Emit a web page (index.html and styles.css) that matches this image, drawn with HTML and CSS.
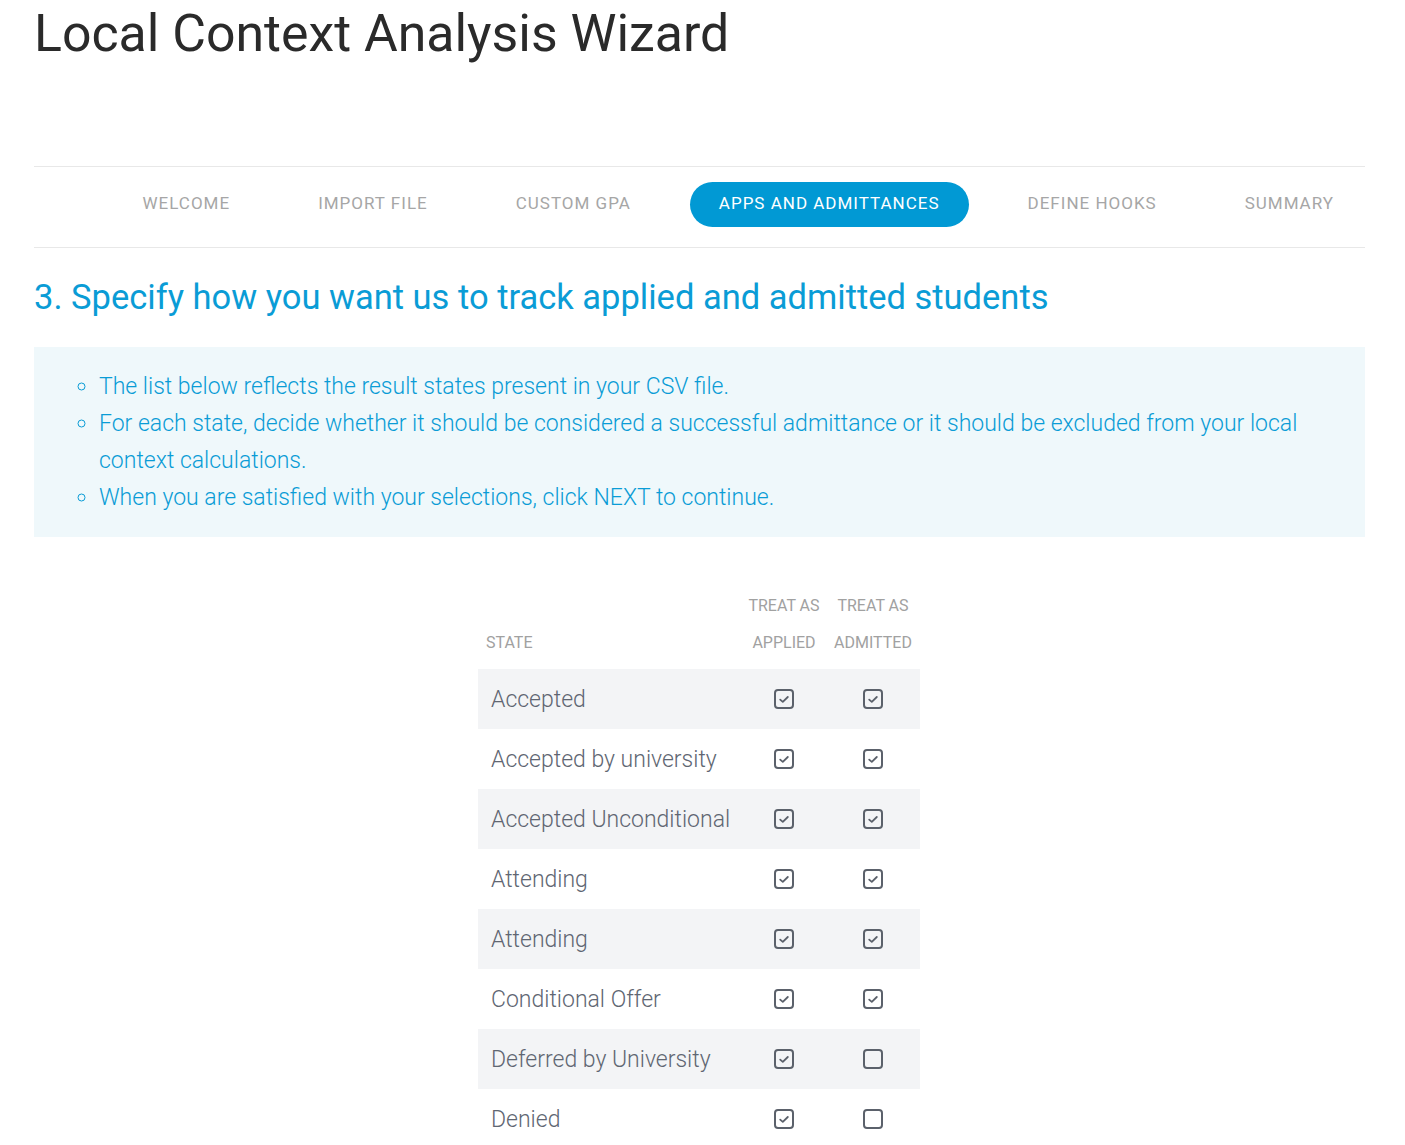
FILE: index.html
```html
<!DOCTYPE html>
<html lang="en">
<head>
  <meta charset="UTF-8">
  <meta name="viewport" content="width=device-width, initial-scale=1.0">
  <title>Local Context Analysis Wizard</title>
  <link rel="stylesheet" href="styles.css">
</head>
<body>

  <div class="page">
    <h1 class="title">Local Context Analysis Wizard</h1>

    <ul class="steps">
      <li class="step">Welcome</li>
      <li class="step">Import File</li>
      <li class="step">Custom GPA</li>
      <li class="step active">Apps and Admittances</li>
      <li class="step">Define Hooks</li>
      <li class="step">Summary</li>
    </ul>

    <h2 class="heading">3. Specify how you want us to track applied and admitted students</h2>

    <div class="info">
      <ul>
        <li>The list below reflects the result states present in your CSV file.</li>
        <li>For each state, decide whether it should be considered a successful admittance or it should be excluded from your local context calculations.</li>
        <li>When you are satisfied with your selections, click NEXT to continue.</li>
      </ul>
    </div>

    <table class="states">
      <thead>
        <tr>
          <th class="state-col">State</th>
          <th class="applied">Treat as<br>applied</th>
          <th class="admitted">Treat as<br>admitted</th>
        </tr>
      </thead>
      <tbody id="stateRows"></tbody>
    </table>
  </div>

  <script>
    const states = [
      ['Accepted', true, true],
      ['Accepted by university', true, true],
      ['Accepted Unconditional', true, true],
      ['Attending', true, true],
      ['Attending', true, true],
      ['Conditional Offer', true, true],
      ['Deferred by University', true, false],
      ['Denied', true, false]
    ];
    const tick = '<svg viewBox="0 0 20 20" width="20" height="20"><rect x="1" y="1" width="18" height="18" rx="3" fill="none" stroke="#5b616b" stroke-width="2"/><path d="M6.2 10.6 L8.8 12.9 L13.8 8" fill="none" stroke="#5b616b" stroke-width="1.8" stroke-linecap="round" stroke-linejoin="round"/></svg>';
    const blank = '<svg viewBox="0 0 20 20" width="20" height="20"><rect x="1" y="1" width="18" height="18" rx="3" fill="none" stroke="#5b616b" stroke-width="2"/></svg>';
    const rows = document.getElementById('stateRows');

    states.forEach(([name, applied, admitted]) => {
      const tr = document.createElement('tr');
      tr.innerHTML = `<td class="state-col">${name}</td>` +
        `<td class="box">${applied ? tick : blank}</td>` +
        `<td class="box">${admitted ? tick : blank}</td>`;
      rows.appendChild(tr);
    });
  </script>

</body>
</html>
```

FILE: styles.css
```css
body {
  margin: 0;
  font-family: Roboto, "Liberation Sans", sans-serif;
  background-color: #fff;
}
.page {
  margin: 0 40px 0 34px;
}
.title {
  margin: 0;
  padding-top: 3px;
  font-size: 51.8px;
  font-weight: 400;
  line-height: 62px;
  color: #2a2a2a;
}
.steps {
  list-style: none;
  margin: 101px 0 0;
  padding: 15px 2px 20px 0;
  border-top: 1px solid #e8e8e8;
  border-bottom: 1px solid #e8e8e8;
  display: flex;
  justify-content: flex-end;
  gap: 30px;
}
.step {
  padding: 0 29px;
  height: 45px;
  line-height: 43px;
  border-radius: 23px;
  font-size: 17px;
  letter-spacing: 1px;
  text-transform: uppercase;
  color: #a6a6a6;
}
.step.active {
  background-color: #0199d4;
  color: #fff;
}
.heading {
  margin: 29px 0 0;
  font-size: 34.5px;
  font-weight: 400;
  line-height: 40px;
  color: #0a9cd6;
}
.info {
  margin-top: 30px;
  background-color: #eff8fb;
  padding: 21px 60px 21px 0;
}
.info ul {
  margin: 0;
  padding-left: 65px;
  list-style: circle;
}
.info li {
  font-size: 23px;
  font-weight: 300;
  line-height: 37px;
  color: #0a9cd6;
}
.states {
  margin: 50px 0 0 444px;
  width: 442px;
  border-collapse: collapse;
}
.states th {
  font-size: 16px;
  font-weight: 400;
  text-transform: uppercase;
  line-height: 37px;
  color: #a1a1a1;
  text-align: center;
  vertical-align: bottom;
  padding: 0 0 8px;
}
.states th.state-col {
  text-align: left;
  padding-left: 8px;
}
.states td {
  height: 60px;
  padding: 0;
  font-size: 23px;
  font-weight: 300;
  color: #606672;
}
.states td.state-col {
  padding-left: 13px;
}
.states .applied {
  width: 84px;
}
.states .admitted {
  width: 94px;
}
.states td.box {
  text-align: center;
}
.states td.box svg {
  display: block;
  margin: 0 auto;
}
.states tbody tr:nth-child(odd) {
  background-color: #f3f4f6;
}
```
